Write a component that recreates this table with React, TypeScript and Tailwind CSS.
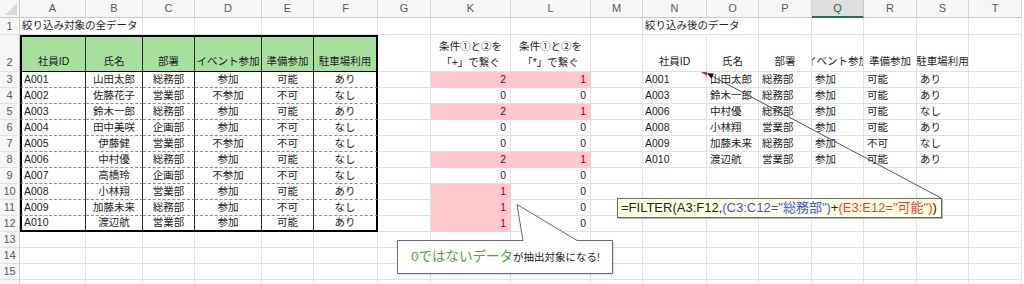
import React from "react";
import clsx from "clsx";

const COLS = ["A", "B", "C", "D", "E", "F", "G", "K", "L", "M", "N", "O", "P", "Q", "R", "S", "T"];
const ROWS = [1, 2, 3, 4, 5, 6, 7, 8, 9, 10, 11, 12, 13, 14, 15, 16];

const HEADS = ["社員ID", "氏名", "部署", "イベント参加", "準備参加", "駐車場利用"];

const SOURCE = [
  ["A001", "山田太郎", "総務部", "参加", "可能", "あり"],
  ["A002", "佐藤花子", "営業部", "不参加", "不可", "なし"],
  ["A003", "鈴木一郎", "総務部", "参加", "可能", "あり"],
  ["A004", "田中美咲", "企画部", "参加", "不可", "なし"],
  ["A005", "伊藤健", "営業部", "不参加", "不可", "なし"],
  ["A006", "中村優", "総務部", "参加", "可能", "なし"],
  ["A007", "高橋玲", "企画部", "不参加", "不可", "なし"],
  ["A008", "小林翔", "営業部", "参加", "可能", "あり"],
  ["A009", "加藤未来", "総務部", "参加", "不可", "なし"],
  ["A010", "渡辺航", "営業部", "参加", "可能", "あり"],
];

const CALC = [
  [2, 1],
  [0, 0],
  [2, 1],
  [0, 0],
  [0, 0],
  [2, 1],
  [0, 0],
  [1, 0],
  [1, 0],
  [1, 0],
];

const RESULT = SOURCE.filter((r) => r[2] === "総務部" || r[4] === "可能");

type Cell = { v: string; align: "left" | "center" | "right" };

function buildCells() {
  const m: Record<string, Cell> = {};
  m["A1"] = { v: "絞り込み対象の全データ", align: "left" };
  m["N1"] = { v: "絞り込み後のデータ", align: "left" };
  HEADS.forEach((h, i) => {
    m["ABCDEF"[i] + "2"] = { v: h, align: "center" };
    m["NOPQRS"[i] + "2"] = { v: h, align: "center" };
  });
  m["K2"] = { v: "条件①と②を\n「+」で繋ぐ", align: "center" };
  m["L2"] = { v: "条件①と②を\n「*」で繋ぐ", align: "center" };
  SOURCE.forEach((row, i) => {
    row.forEach((v, j) => {
      m["ABCDEF"[j] + (i + 3)] = { v, align: j === 0 ? "left" : "center" };
    });
    m["K" + (i + 3)] = { v: String(CALC[i][0]), align: "right" };
    m["L" + (i + 3)] = { v: String(CALC[i][1]), align: "right" };
  });
  RESULT.forEach((row, i) => {
    row.forEach((v, j) => {
      m["NOPQRS"[j] + (i + 3)] = { v, align: "left" };
    });
  });
  return m;
}

const CELLS = buildCells();

function isPink(col: string, row: number) {
  if (row < 3 || row > 12) return false;
  const [k, l] = CALC[row - 3];
  if (col === "K") return k > 0;
  if (col === "L") return l > 0;
  return false;
}

function SheetCell({ col, row }: { col: string; row: number }) {
  const cell = CELLS[col + row];
  const inTable = row >= 2 && row <= 12 && "ABCDEF".includes(col);
  const pink = isPink(col, row);
  const overflow = (col === "A" || col === "N") && row === 1;

  return (
    <div
      className={clsx(
        "flex min-w-0 whitespace-nowrap",
        overflow ? "overflow-visible" : "overflow-hidden",
        row === 2 ? "items-end pb-[1px]" : "items-center",
        cell?.align === "left" && (col === "O" || col === "P" || col === "Q" || col === "R" || col === "S" ? "justify-start pl-[3px]" : "justify-start pl-[2px]"),
        cell?.align === "center" && "justify-center",
        cell?.align === "right" && "justify-end pr-[4px]",
        inTable && (col === "F" ? "border-r-2 border-r-black" : "border-r border-r-[#2a2a2a]"),
        inTable &&
          (row === 2
            ? "border-b border-b-black"
            : row === 12
              ? "border-b-2 border-b-black"
              : "border-b border-b-[#8c8c8c] [border-bottom-style:dashed]"),
        inTable && col === "A" && "border-l-2 border-l-black",
        inTable && row === 2 && "border-t-2 border-t-black bg-[#a6e09c]",
        !inTable && pink && "border-r border-b border-[#ffc7ce] bg-[#ffc7ce] text-[#9c0006]",
        !inTable && !pink && (overflow ? "border-b border-b-[#e1e1e1]" : "border-r border-b border-[#e1e1e1]"),
        !pink && "text-[#1c1c1c]"
      )}
    >
      {cell && (
        <span className={clsx(cell.v.includes("\n") && "whitespace-pre-line text-center leading-[16px]")}>{cell.v}</span>
      )}
    </div>
  );
}

function Callout() {
  return (
    <div className="absolute left-[397px] top-[204px] w-[217px] h-[71px]">
      <svg width="217" height="71" className="absolute inset-0 drop-shadow-[1px_1px_1px_rgba(0,0,0,0.15)]">
        <path
          d="M0.5 36.5 H126 L120 0.5 L180 36.5 H215.5 V69.5 H0.5 Z"
          fill="#ffffff"
          stroke="#5d6d7e"
          strokeWidth="1"
        />
      </svg>
      <div className="absolute left-0 right-0 top-[37px] h-[32px] flex items-center justify-center">
        <span className="text-[13.5px] text-[#5b9b3c]">0ではないデータ</span>
        <span className="text-[10.5px] text-[#222] mt-[2px]">が抽出対象になる!</span>
      </div>
    </div>
  );
}

function FormulaBox() {
  return (
    <div className="absolute left-[617px] top-[198px] w-[325px] h-[20px] bg-[#ffffe1] border border-[#6b6b6b] shadow-[1px_1px_0_#b5b5b5] flex items-center pl-[3px] text-[13px] whitespace-nowrap text-[#222]">
      <span>=FILTER(A3:F12,</span>
      <span className="text-[#3f52e6]">(C3:C12="総務部")</span>
      <span>+</span>
      <span className="text-[#f23c3c]">(E3:E12="可能")</span>
      <span>)</span>
    </div>
  );
}

function Overlay() {
  return (
    <svg className="absolute inset-0 pointer-events-none" width="1024" height="284">
      <polygon points="701,72 707,72 707,76" fill="#e8231c" />
      <line x1="941" y1="198" x2="711" y2="75.5" stroke="#555" strokeWidth="1" />
      <polygon points="707,73 714,73.8 711.2,78.5" fill="#111" />
    </svg>
  );
}

export default function App() {
  return (
    <div className="relative w-[1024px] h-[284px] overflow-hidden bg-white font-['Liberation_Sans','Noto_Sans_CJK_JP',sans-serif] text-[10.5px]">
      <div className="grid grid-cols-[20px_66px_57px_52px_67px_52px_64px_53px_80px_80px_52px_64px_52px_53px_52px_53px_52px_53px] grid-rows-[18px_17px_37px_repeat(14,16px)]">
        <div className="relative bg-[#f6f6f6] border-r border-b border-[#c9c9c9]">
          <svg width="12" height="12" className="absolute right-[2px] bottom-[2px]">
            <polygon points="12,0 12,12 0,12" fill="#d9d9d9" />
          </svg>
        </div>
        {COLS.map((c) => (
          <div
            key={c}
            className={clsx(
              "flex items-center justify-center text-[11px] border-r",
              c === "Q"
                ? "bg-[#dedede] text-[#1e7145] border-r-[#c9c9c9] border-b-2 border-b-[#217346]"
                : "bg-[#f6f6f6] text-[#5a5a5a] border-b border-[#d4d4d4] border-b-[#c9c9c9]"
            )}
          >
            {c}
          </div>
        ))}
        {ROWS.map((r) => (
          <React.Fragment key={r}>
            <div
              className={clsx(
                "flex justify-center text-[11px] text-[#5a5a5a] bg-[#f6f6f6] border-r border-r-[#c9c9c9] border-b border-b-[#e1e1e1]",
                r === 2 ? "items-end pb-[1px]" : "items-center"
              )}
            >
              {r < 16 ? r : null}
            </div>
            {COLS.map((c) => (
              <SheetCell key={c + r} col={c} row={r} />
            ))}
          </React.Fragment>
        ))}
      </div>
      <Callout />
      <FormulaBox />
      <Overlay />
    </div>
  );
}
